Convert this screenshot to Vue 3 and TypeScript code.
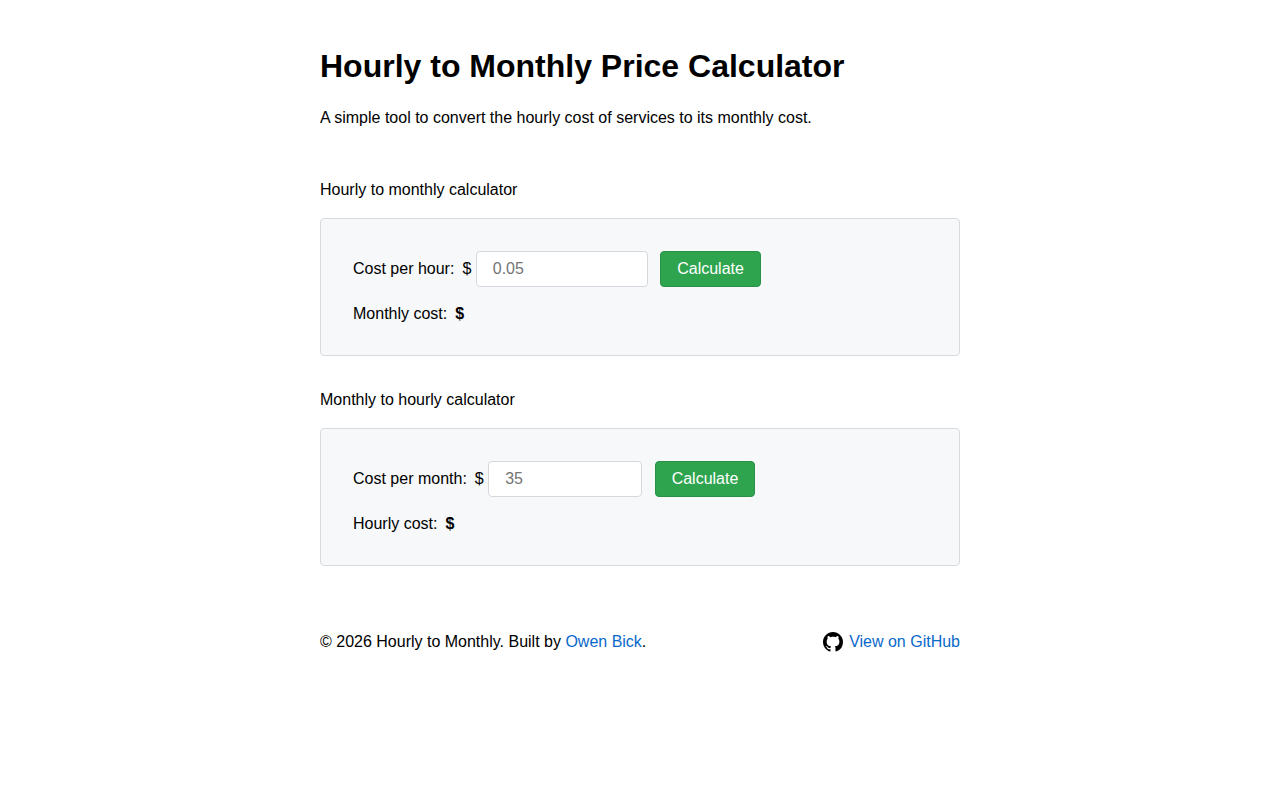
<script setup lang="ts">
import { ref } from 'vue'

const HOURS_PER_MONTH = 730

const hourly = ref('')
const monthly = ref('')
const monthlyCost = ref('')
const hourlyCost = ref('')

function toMonthly(): void {
  const value = Number(hourly.value)
  monthlyCost.value = value ? (value * HOURS_PER_MONTH).toFixed(2) : ''
}

function toHourly(): void {
  const value = Number(monthly.value)
  hourlyCost.value = value ? (value / HOURS_PER_MONTH).toFixed(4) : ''
}
</script>

<template>
  <div class="page">
    <header>
      <h1>Hourly to Monthly Price Calculator</h1>
      <p class="intro">A simple tool to convert the hourly cost of services to its monthly cost.</p>
    </header>

    <main>
      <section>
        <p class="title">Hourly to monthly calculator</p>
        <form class="card" @submit.prevent="toMonthly">
          <div>
            <label class="name" for="hourly">Cost per hour:</label>$ <input id="hourly" v-model="hourly" class="field wide" type="text" inputmode="decimal" placeholder="0.05" /> <button type="submit">Calculate</button>
          </div>
          <div>
            <span class="name">Monthly cost:</span><strong>${{ monthlyCost }}</strong>
          </div>
        </form>
      </section>

      <section>
        <p class="title">Monthly to hourly calculator</p>
        <form class="card" @submit.prevent="toHourly">
          <div>
            <label class="name" for="monthly">Cost per month:</label>$ <input id="monthly" v-model="monthly" class="field" type="text" inputmode="decimal" placeholder="35" /> <button type="submit">Calculate</button>
          </div>
          <div>
            <span class="name">Hourly cost:</span><strong>${{ hourlyCost }}</strong>
          </div>
        </form>
      </section>
    </main>

    <footer>
      <span>© 2026 Hourly to Monthly. Built by <a href="#">Owen Bick</a>.</span>
      <a class="github" href="#">
        <svg viewBox="0 0 16 16" width="20" height="20" aria-hidden="true">
          <path
            fill="#000"
            fill-rule="evenodd"
            d="M8 0C3.58 0 0 3.58 0 8c0 3.54 2.29 6.53 5.47 7.59.4.07.55-.17.55-.38 0-.19-.01-.82-.01-1.49-2.01.37-2.53-.49-2.69-.94-.09-.23-.48-.94-.82-1.13-.28-.15-.68-.52-.01-.53.63-.01 1.08.58 1.23.82.72 1.21 1.87.87 2.33.66.07-.52.28-.87.51-1.07-1.78-.2-3.64-.89-3.64-3.95 0-.87.31-1.59.82-2.15-.08-.2-.36-1.02.08-2.12 0 0 .67-.21 2.2.82.64-.18 1.32-.27 2-.27s1.36.09 2 .27c1.53-1.04 2.2-.82 2.2-.82.44 1.1.16 1.92.08 2.12.51.56.82 1.27.82 2.15 0 3.07-1.87 3.75-3.65 3.95.29.25.54.73.54 1.48 0 1.07-.01 1.93-.01 2.2 0 .21.15.46.55.38A8.01 8.01 0 0 0 16 8c0-4.42-3.58-8-8-8z"
          />
        </svg>
        View on GitHub
      </a>
    </footer>
  </div>
</template>

<style>
body {
  background: #fff;
}
</style>

<style scoped>
.page {
  box-sizing: border-box;
  max-width: 672px;
  margin: 0 auto;
  padding: 48px 16px;
  color: #000;
  font-family: "Liberation Sans", Arial, sans-serif;
  font-size: 16px;
  line-height: 18px;
}

h1 {
  margin: 0 0 25px;
  font-size: 32px;
  line-height: 36px;
}

.intro {
  margin: 0 0 54px;
}

.title {
  margin: 0 0 19px;
}

section + section {
  margin-top: 35px;
}

.card {
  display: flex;
  flex-direction: column;
  gap: 18px;
  padding: 32px;
  background: #f6f8fa;
  border: 1px solid #d8dbde;
  border-radius: 4px;
}

.name {
  margin-right: 8px;
}

.field {
  box-sizing: border-box;
  width: 154px;
  height: 36px;
  margin: 0;
  padding: 0 16px;
  background: #fff;
  border: 1px solid #d5d9dd;
  border-radius: 4px;
  color: #000;
  font: inherit;
}

.field.wide {
  width: 172px;
}

.field::placeholder {
  color: #757575;
}

button {
  box-sizing: border-box;
  height: 36px;
  margin: 0 0 0 8px;
  padding: 0 16px;
  background: #2ea44f;
  border: 1px solid #2a9147;
  border-radius: 4px;
  color: #fff;
  font: inherit;
  cursor: pointer;
}

footer {
  display: flex;
  justify-content: space-between;
  align-items: center;
  margin-top: 66px;
}

a {
  color: #0969ca;
  text-decoration: none;
}

.github {
  display: flex;
  align-items: center;
  gap: 6px;
}
</style>
